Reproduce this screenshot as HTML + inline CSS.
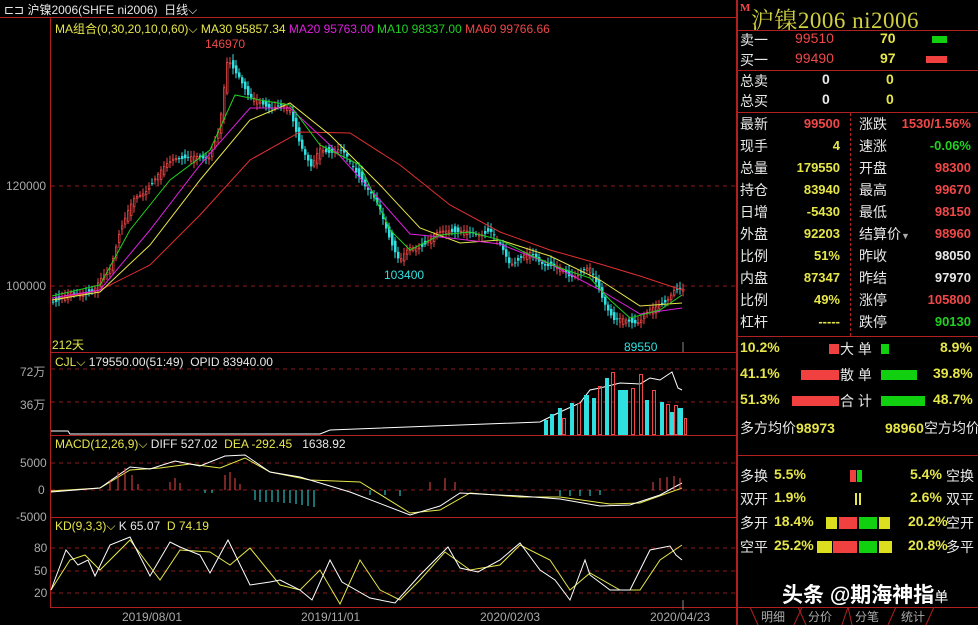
<!DOCTYPE html>
<html><head><meta charset="utf-8"><style>
*{margin:0;padding:0;box-sizing:border-box}
body{width:978px;height:625px;background:#000;overflow:hidden;position:relative;font-family:"Liberation Sans","Noto Sans CJK SC",sans-serif;font-size:13px;color:#ddd}
.a{position:absolute;white-space:nowrap}
.y{color:#e6e64a}.r{color:#f04848}.g{color:#20d020}.w{color:#e8e8e8}.m{color:#e020e0}.c{color:#30e0e0}.gr{color:#aaa}
.row{position:absolute;left:0;width:242px;height:22px;font-size:14px}
.b{font-weight:bold}
.col>div{height:22px;line-height:22px;overflow:visible}
</style></head><body>
<div class="a w" style="left:4px;top:1px;font-size:12px">⊏⊐ 沪镍2006(SHFE ni2006)&nbsp;&nbsp;日线⌵</div>
<div class="a" style="left:0;top:17px;width:736px;height:1px;background:#b02020"></div>
<div class="a" style="left:50px;top:17px;width:1px;height:591px;background:#b02020"></div>
<div class="a" style="left:50px;top:352px;width:686px;height:1px;background:#b02020"></div>
<div class="a" style="left:50px;top:435px;width:686px;height:1px;background:#b02020"></div>
<div class="a" style="left:50px;top:517px;width:686px;height:1px;background:#b02020"></div>
<div class="a" style="left:50px;top:607px;width:686px;height:1px;background:#b02020"></div>
<div class="a" style="left:736px;top:0;width:2px;height:625px;background:#b02020"></div>
<div class="a" style="left:55px;top:20px;font-size:12px"><span class="y">MA组合(0,30,20,10,0,60)⌵ MA30 95857.34</span> <span class="m">MA20 95763.00</span> <span class="g">MA10 98337.00</span> <span class="r">MA60 99766.66</span></div>
<div class="a r" style="left:205px;top:37px;font-size:12px">146970</div>
<div class="a c" style="left:384px;top:268px;font-size:12px">103400</div>
<div class="a c" style="left:624px;top:340px;font-size:12px">89550</div>
<div class="a y" style="left:52px;top:336px;font-size:12px">212天</div>
<div class="a gr" style="left:6px;top:179px;font-size:12px">120000</div>
<div class="a gr" style="left:6px;top:279px;font-size:12px">100000</div>
<div class="a y" style="left:55px;top:355px;font-size:12px">CJL⌵ <span class="w">179550.00(51:49)&nbsp; OPID 83940.00</span></div>
<div class="a gr" style="left:20px;top:363px;font-size:12px">72万</div>
<div class="a gr" style="left:20px;top:396px;font-size:12px">36万</div>
<div class="a y" style="left:55px;top:437px;font-size:12px">MACD(12,26,9)⌵ <span class="w">DIFF 527.02</span>&nbsp; DEA -292.45&nbsp;&nbsp; <span class="w">1638.92</span></div>
<div class="a gr" style="left:20px;top:456px;font-size:12px">5000</div>
<div class="a gr" style="left:38px;top:483px;font-size:12px">0</div>
<div class="a gr" style="left:16px;top:510px;font-size:12px">-5000</div>
<div class="a y" style="left:55px;top:519px;font-size:12px">KD(9,3,3)⌵ <span class="w">K 65.07</span>&nbsp; D 74.19</div>
<div class="a gr" style="left:34px;top:541px;font-size:12px">80</div>
<div class="a gr" style="left:34px;top:564px;font-size:12px">50</div>
<div class="a gr" style="left:34px;top:586px;font-size:12px">20</div>
<div class="a gr" style="left:122px;top:610px;font-size:12px">2019/08/01</div>
<div class="a gr" style="left:301px;top:610px;font-size:12px">2019/11/01</div>
<div class="a gr" style="left:480px;top:610px;font-size:12px">2020/02/03</div>
<div class="a gr" style="left:650px;top:610px;font-size:12px">2020/04/23</div>
<svg class="a" style="left:0;top:0" width="736" height="625">
<g stroke="#8a1a1a" stroke-dasharray="4,4" stroke-width="1">
<line x1="51" y1="186" x2="736" y2="186"/><line x1="51" y1="286" x2="736" y2="286"/>
<line x1="51" y1="369" x2="736" y2="369"/><line x1="51" y1="402" x2="736" y2="402"/>
<line x1="51" y1="463" x2="736" y2="463"/><line x1="51" y1="490" x2="736" y2="490"/>
<line x1="51" y1="548" x2="736" y2="548"/><line x1="51" y1="571" x2="736" y2="571"/><line x1="51" y1="593" x2="736" y2="593"/>
</g>
<g id="candles"></g>
<polyline fill="none" stroke="#e03030" stroke-width="1" points="52,300 100,290 150,265 200,215 250,160 300,132 350,133 400,165 450,205 500,232 550,250 600,264 640,276 682,290"/>
<polyline fill="none" stroke="#e6e64a" stroke-width="1" points="52,300 100,292 150,245 200,180 250,120 290,103 330,135 380,185 420,228 460,243 500,240 550,256 600,280 640,306 682,303"/>
<polyline fill="none" stroke="#e020e0" stroke-width="1" points="52,298 100,290 150,230 200,165 250,108 290,108 330,145 380,200 410,234 450,238 500,244 550,264 600,290 640,314 682,308"/>
<polyline fill="none" stroke="#20d020" stroke-width="1" points="52,296 100,285 130,230 170,180 210,150 235,95 260,100 290,105 320,145 360,165 390,230 410,250 440,235 470,232 500,240 530,255 560,268 590,278 610,300 630,318 660,310 682,295"/>
<polyline fill="none" stroke="#fff" points="51,431 68,431 70,434 320,434 330,430 540,422 560,412 580,403 590,390 600,388 620,383 640,384 650,378 660,380 672,372 678,388 682,390"/>
<g fill="#30e0e0"><rect x="544" y="420" width="4" height="15"/><rect x="550" y="414" width="4" height="21"/><rect x="558" y="408" width="4" height="27"/><rect x="570" y="403" width="4" height="32"/><rect x="584" y="395" width="5" height="40"/><rect x="592" y="398" width="4" height="37"/><rect x="605" y="378" width="4" height="57"/><rect x="618" y="390" width="10" height="45"/><rect x="645" y="400" width="4" height="35"/><rect x="660" y="402" width="4" height="33"/><rect x="670" y="412" width="4" height="23"/><rect x="678" y="408" width="5" height="27"/></g>
<g fill="none" stroke="#f04848"><rect x="562.5" y="418.5" width="3" height="16"/><rect x="577.5" y="403.5" width="3" height="31"/><rect x="598.5" y="386.5" width="3" height="48"/><rect x="611.5" y="372.5" width="3" height="62"/><rect x="631.5" y="388.5" width="3" height="46"/><rect x="639.5" y="374.5" width="3" height="60"/><rect x="652.5" y="390.5" width="3" height="44"/><rect x="666.5" y="404.5" width="3" height="30"/><rect x="674.5" y="405.5" width="3" height="29"/><rect x="684.5" y="418.5" width="2" height="16"/></g>
<polyline fill="none" stroke="#e6e64a" points="51,491 100,488 130,470 160,468 190,464 220,468 245,458 270,472 310,480 360,482 410,513 440,510 470,493 520,497 560,497 610,504 640,503 682,488"/>
<polyline fill="none" stroke="#fff" points="51,492 100,488 130,467 150,469 175,461 200,466 225,456 245,455 270,472 300,477 330,486 350,492 410,515 440,506 460,493 520,496 560,499 600,506 630,505 660,495 682,483"/>
<g stroke="#f04848"><line x1="110" y1="490" x2="110" y2="480"/><line x1="118" y1="490" x2="118" y2="472"/><line x1="125" y1="490" x2="125" y2="468"/><line x1="132" y1="490" x2="132" y2="475"/><line x1="138" y1="490" x2="138" y2="484"/><line x1="170" y1="490" x2="170" y2="482"/><line x1="175" y1="490" x2="175" y2="478"/><line x1="180" y1="490" x2="180" y2="483"/><line x1="225" y1="490" x2="225" y2="475"/><line x1="230" y1="490" x2="230" y2="472"/><line x1="235" y1="490" x2="235" y2="478"/><line x1="240" y1="490" x2="240" y2="484"/><line x1="430" y1="490" x2="430" y2="482"/><line x1="445" y1="490" x2="445" y2="478"/><line x1="455" y1="490" x2="455" y2="482"/><line x1="653" y1="490" x2="653" y2="482"/><line x1="660" y1="490" x2="660" y2="478"/><line x1="667" y1="490" x2="667" y2="477"/><line x1="674" y1="490" x2="674" y2="476"/><line x1="680" y1="490" x2="680" y2="478"/></g>
<g stroke="#30e0e0"><line x1="255" y1="490" x2="255" y2="500"/><line x1="260" y1="490" x2="260" y2="502"/><line x1="266" y1="490" x2="266" y2="502"/><line x1="272" y1="490" x2="272" y2="502"/><line x1="278" y1="490" x2="278" y2="502"/><line x1="284" y1="490" x2="284" y2="503"/><line x1="290" y1="490" x2="290" y2="503"/><line x1="296" y1="490" x2="296" y2="504"/><line x1="302" y1="490" x2="302" y2="505"/><line x1="308" y1="490" x2="308" y2="506"/><line x1="314" y1="490" x2="314" y2="507"/><line x1="205" y1="490" x2="205" y2="493"/><line x1="212" y1="490" x2="212" y2="493"/><line x1="370" y1="490" x2="370" y2="495"/><line x1="385" y1="490" x2="385" y2="495"/><line x1="400" y1="490" x2="400" y2="496"/><line x1="560" y1="490" x2="560" y2="496"/><line x1="570" y1="490" x2="570" y2="496"/><line x1="580" y1="490" x2="580" y2="496"/><line x1="590" y1="490" x2="590" y2="496"/><line x1="600" y1="490" x2="600" y2="495"/></g>
<polyline fill="none" stroke="#e6e64a" points="51,590 70,560 85,555 100,570 130,540 160,580 180,550 210,552 230,565 250,548 280,585 300,590 320,570 340,604 360,560 380,590 400,600 420,580 445,552 470,570 500,565 520,545 550,560 570,590 590,573 620,590 640,590 660,560 682,545"/>
<polyline fill="none" stroke="#fff" points="51,590 66,550 78,565 88,560 95,576 110,545 130,537 150,576 170,542 180,547 200,555 210,573 228,540 250,585 270,582 280,580 300,590 312,600 330,560 342,582 370,598 395,603 420,575 448,547 460,568 478,572 500,560 520,543 540,570 555,580 570,600 585,560 590,575 610,590 630,590 650,550 670,546 676,555 682,560"/>
<line x1="683" y1="600" x2="683" y2="610" stroke="#888"/>
<line x1="683" y1="342" x2="683" y2="352" stroke="#888"/>
</svg>
<script>
(function(){
var P=[[52,300],[95,290],[110,270],[120,230],[135,200],[160,175],[175,155],[190,160],[210,155],[220,130],[228,60],[240,75],[250,100],[270,105],[290,110],[300,140],[312,170],[320,150],[340,150],[360,175],[380,210],[400,262],[410,250],[430,240],[450,228],[470,235],[490,230],[510,262],[530,255],[550,265],[570,275],[590,270],[600,290],[615,322],[640,320],[660,305],[675,290],[682,292]];
function f(x){for(var i=1;i<P.length;i++){if(x<=P[i][0]){var a=P[i-1],b=P[i];return a[1]+(b[1]-a[1])*(x-a[0])/(b[0]-a[0]);}}return P[P.length-1][1];}
var g=document.getElementById('candles'),s='';
for(var x=52;x<=683;x+=3){
 var yo=f(x-1.5)+Math.sin(x*1.7)*3,yc=f(x+1.5)+Math.sin(x*2.3+1)*3;
 var hi=Math.min(yo,yc)-2-Math.abs(Math.sin(x*0.9))*4,lo=Math.max(yo,yc)+2+Math.abs(Math.cos(x*1.3))*4;
 var up=yc<yo,col=up?'#f04848':'#30e0e0',t=Math.min(yo,yc),h=Math.max(1,Math.abs(yo-yc));
 s+='<line x1="'+(x+1)+'" y1="'+hi+'" x2="'+(x+1)+'" y2="'+lo+'" stroke="'+col+'"/>';
 s+=up?'<rect x="'+(x+0.5)+'" y="'+t+'" width="1.5" height="'+h+'" fill="#000" stroke="'+col+'" stroke-width="0.8"/>':'<rect x="'+x+'" y="'+t+'" width="2.5" height="'+h+'" fill="'+col+'"/>';
}
g.innerHTML=s;
})();
</script>
<div class="a" style="left:738px;top:0;width:240px;height:625px">
<div class="a" style="left:2px;top:2px;font-size:23px;color:#d0d040;font-family:'Liberation Serif','Noto Serif CJK SC',serif;letter-spacing:0.5px"><span class="r b" style="font-size:11px;vertical-align:top">M</span>沪镍2006 ni2006</div>
<div class="a" style="left:0;top:30px;width:240px;height:1px;background:#b02020"></div>
<div class="a" style="left:0;top:70px;width:240px;height:1px;background:#b02020"></div>
<div class="a" style="left:0;top:112px;width:240px;height:1px;background:#b02020"></div>
<div class="a" style="left:0;top:336px;width:240px;height:1px;background:#b02020"></div>
<div class="a" style="left:0;top:455px;width:240px;height:1px;background:#b02020"></div>
<div class="a" style="left:112px;top:113px;width:1px;height:223px;border-left:1px dashed #b02020"></div>
<div class="row" style="top:30px"><span class="a w" style="left:2px">卖一</span><span class="a r" style="left:57px">99510</span><span class="a y b" style="left:142px">70</span><span class="a" style="left:194px;top:6px;width:15px;height:7px;background:#10d010"></span></div>
<div class="row" style="top:50px"><span class="a w" style="left:2px">买一</span><span class="a r" style="left:57px">99490</span><span class="a y b" style="left:142px">97</span><span class="a" style="left:188px;top:6px;width:21px;height:7px;background:#f04040"></span></div>
<div class="row" style="top:71px"><span class="a w" style="left:2px">总卖</span><span class="a w b" style="left:84px">0</span><span class="a y b" style="left:148px">0</span></div>
<div class="row" style="top:91px"><span class="a w" style="left:2px">总买</span><span class="a w b" style="left:84px">0</span><span class="a y b" style="left:148px">0</span></div>
<div class="a b col" style="left:2px;top:113px;width:100px;font-size:13px">
<div><span class="w" style="font-weight:normal;font-size:14px">最新</span><span class="r" style="float:right">99500</span></div>
<div><span class="w" style="font-weight:normal;font-size:14px">现手</span><span class="y" style="float:right">4</span></div>
<div><span class="w" style="font-weight:normal;font-size:14px">总量</span><span class="y" style="float:right">179550</span></div>
<div><span class="w" style="font-weight:normal;font-size:14px">持仓</span><span class="y" style="float:right">83940</span></div>
<div><span class="w" style="font-weight:normal;font-size:14px">日增</span><span class="y" style="float:right">-5430</span></div>
<div><span class="w" style="font-weight:normal;font-size:14px">外盘</span><span class="y" style="float:right">92203</span></div>
<div><span class="w" style="font-weight:normal;font-size:14px">比例</span><span class="y" style="float:right">51%</span></div>
<div><span class="w" style="font-weight:normal;font-size:14px">内盘</span><span class="y" style="float:right">87347</span></div>
<div><span class="w" style="font-weight:normal;font-size:14px">比例</span><span class="y" style="float:right">49%</span></div>
<div><span class="w" style="font-weight:normal;font-size:14px">杠杆</span><span class="y" style="float:right">-----</span></div>
</div>
<div class="a b col" style="left:121px;top:113px;width:112px;font-size:13px">
<div><span class="w" style="font-weight:normal;font-size:14px">涨跌</span><span class="r" style="float:right">1530/1.56%</span></div>
<div><span class="w" style="font-weight:normal;font-size:14px">速涨</span><span class="g" style="float:right">-0.06%</span></div>
<div><span class="w" style="font-weight:normal;font-size:14px">开盘</span><span class="r" style="float:right">98300</span></div>
<div><span class="w" style="font-weight:normal;font-size:14px">最高</span><span class="r" style="float:right">99670</span></div>
<div><span class="w" style="font-weight:normal;font-size:14px">最低</span><span class="r" style="float:right">98150</span></div>
<div><span class="w" style="font-weight:normal;font-size:14px">结算价<span class="gr" style="font-size:9px">▼</span></span><span class="r" style="float:right">98960</span></div>
<div><span class="w" style="font-weight:normal;font-size:14px">昨收</span><span class="w" style="float:right">98050</span></div>
<div><span class="w" style="font-weight:normal;font-size:14px">昨结</span><span class="w" style="float:right">97970</span></div>
<div><span class="w" style="font-weight:normal;font-size:14px">涨停</span><span class="r" style="float:right">105800</span></div>
<div><span class="w" style="font-weight:normal;font-size:14px">跌停</span><span class="g" style="float:right">90130</span></div>
</div>
<div class="row b" style="top:339px"><span class="a y" style="left:2px">10.2%</span><span class="a" style="left:91px;top:5px;width:10px;height:10px;background:#f04040"></span><span class="a w" style="left:102px;font-weight:normal">大 单</span><span class="a" style="left:143px;top:5px;width:8px;height:10px;background:#10d010"></span><span class="a y" style="left:202px">8.9%</span></div>
<div class="row b" style="top:365px"><span class="a y" style="left:2px">41.1%</span><span class="a" style="left:63px;top:5px;width:38px;height:10px;background:#f04040"></span><span class="a w" style="left:102px;font-weight:normal">散 单</span><span class="a" style="left:143px;top:5px;width:36px;height:10px;background:#10d010"></span><span class="a y" style="left:195px">39.8%</span></div>
<div class="row b" style="top:391px"><span class="a y" style="left:2px">51.3%</span><span class="a" style="left:54px;top:5px;width:47px;height:10px;background:#f04040"></span><span class="a w" style="left:102px;font-weight:normal">合 计</span><span class="a" style="left:143px;top:5px;width:44px;height:10px;background:#10d010"></span><span class="a y" style="left:195px">48.7%</span></div>
<div class="row" style="top:418px"><span class="a w" style="left:2px">多方均价<b class="y">98973</b></span><span class="a w" style="left:147px"><b class="y">98960</b>空方均价</span></div>
<div class="row b" style="top:466px"><span class="a w" style="left:2px;font-weight:normal">多换</span><span class="a y" style="left:36px">5.5%</span><span class="a" style="left:112px;top:4px;width:6px;height:12px;background:#f04040"></span><span class="a" style="left:119px;top:4px;width:5px;height:12px;background:#10d010"></span><span class="a y" style="left:172px">5.4%</span><span class="a w" style="left:208px;font-weight:normal">空换</span></div>
<div class="row b" style="top:489px"><span class="a w" style="left:2px;font-weight:normal">双开</span><span class="a y" style="left:36px">1.9%</span><span class="a" style="left:117px;top:4px;width:2px;height:12px;background:#e6e64a"></span><span class="a" style="left:121px;top:4px;width:2px;height:12px;background:#e6e64a"></span><span class="a y" style="left:172px">2.6%</span><span class="a w" style="left:208px;font-weight:normal">双平</span></div>
<div class="row b" style="top:513px"><span class="a w" style="left:2px;font-weight:normal">多开</span><span class="a y" style="left:36px">18.4%</span><span class="a" style="left:88px;top:4px;width:11px;height:12px;background:#dede20"></span><span class="a" style="left:101px;top:4px;width:18px;height:12px;background:#f04040"></span><span class="a" style="left:121px;top:4px;width:18px;height:12px;background:#10d010"></span><span class="a" style="left:141px;top:4px;width:11px;height:12px;background:#dede20"></span><span class="a y" style="left:170px">20.2%</span><span class="a w" style="left:208px;font-weight:normal">空开</span></div>
<div class="row b" style="top:537px"><span class="a w" style="left:2px;font-weight:normal">空平</span><span class="a y" style="left:36px">25.2%</span><span class="a" style="left:79px;top:4px;width:15px;height:12px;background:#dede20"></span><span class="a" style="left:95px;top:4px;width:24px;height:12px;background:#f04040"></span><span class="a" style="left:121px;top:4px;width:18px;height:12px;background:#10d010"></span><span class="a" style="left:141px;top:4px;width:13px;height:12px;background:#dede20"></span><span class="a y" style="left:170px">20.8%</span><span class="a w" style="left:208px;font-weight:normal">多平</span></div>
<div class="a" style="left:44px;top:579px;font-size:21px;font-weight:bold;color:#fff;text-shadow:0 0 2px #000">头条 @期海神指<span style="font-size:14px;font-weight:normal">单</span></div>
<div class="a" style="left:0;top:607px;width:240px;height:1px;background:#b02020"></div>
<div class="a gr" style="left:0;top:608px;width:240px;height:17px;font-size:12px">
<span class="a" style="left:23px">明细</span><span class="a" style="left:70px">分价</span><span class="a" style="left:117px">分笔</span><span class="a" style="left:163px">统计</span></div>
<svg class="a" style="left:0;top:607px" width="240" height="18"><g stroke="#b02020" fill="none"><polyline points="12,0 20,18"/><polyline points="56,18 64,0 60,0"/><polyline points="60,0 68,18"/><polyline points="104,18 110,0 114,18"/><polyline points="150,18 158,0"/><polyline points="158,0 196,0 188,18"/></g></svg>
</div>
</body></html>
